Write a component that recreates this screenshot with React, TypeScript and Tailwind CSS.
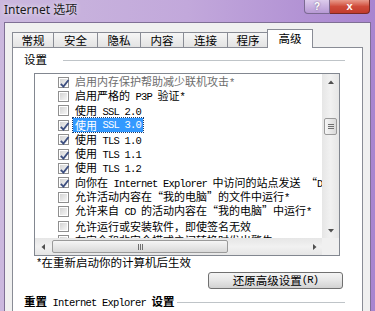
import React from "react";

const rows = [
  { t: "启用内存保护帮助减少联机攻击*", c: true, gray: true },
  { t: "启用严格的 P3P 验证*", c: false },
  { t: "使用 SSL 2.0", c: false },
  { t: "使用 SSL 3.0", c: true, sel: true },
  { t: "使用 TLS 1.0", c: true },
  { t: "使用 TLS 1.1", c: true },
  { t: "使用 TLS 1.2", c: true },
  { t: "向你在 Internet Explorer 中访问的站点发送 “Do Not Track” 请求", c: true },
  { t: "允许活动内容在“我的电脑”的文件中运行*", c: false },
  { t: "允许来自 CD 的活动内容在“我的电脑”中运行*", c: false },
  { t: "允许运行或安装软件，即使签名无效", c: false },
  { t: "在安全和非安全模式之间转换时发出警告", c: false },
];

const tabs = [
  { t: "常规", w: "w-[42px]" },
  { t: "安全", w: "w-[45px]" },
  { t: "隐私", w: "w-[44px]" },
  { t: "内容", w: "w-[44px]" },
  { t: "连接", w: "w-[45px]" },
  { t: "程序", w: "w-[42px]" },
];

// ascii runs get the half-width mono face, like SimSun does
function Mixed({ text, bold }: { text: string; bold?: boolean }) {
  const parts = text.split(/([\x20-\x7e]+)/).filter(Boolean);
  return (
    <>
      {parts.map((p, i) =>
        /^[\x20-\x7e]+$/.test(p) ? (
          <span key={i} className="font-['Liberation_Mono',monospace] text-[10.5px] tracking-[-0.8px] whitespace-pre">
            {p}
          </span>
        ) : (
          <span key={i} className={bold ? "font-bold" : ""}>
            {p}
          </span>
        )
      )}
    </>
  );
}

function Check({ on }: { on: boolean }) {
  return (
    <div className="w-[11px] h-[11px] shrink-0 border border-[#8f8f8f] bg-white p-[1px]">
      <div className="w-full h-full bg-gradient-to-br from-[#d4d4d4] to-[#f6f6f6] relative">
        {on && (
          <svg viewBox="0 0 9 9" className="absolute -left-[1px] -top-[1px] w-[11px] h-[11px]">
            <path d="M1.5 4.8 L3.6 7 L7.8 1.6" fill="none" stroke="#3d4f80" strokeWidth="1.5" />
          </svg>
        )}
      </div>
    </div>
  );
}

function Arrow({ dir }: { dir: "up" | "down" | "left" | "right" }) {
  const d = {
    up: "M1 5 L4 1.5 L7 5 Z",
    down: "M1 3 L4 6.5 L7 3 Z",
    left: "M5 1 L1.5 4 L5 7 Z",
    right: "M3 1 L6.5 4 L3 7 Z",
  }[dir];
  return (
    <svg viewBox="0 0 8 8" className="w-[8px] h-[8px]">
      <path d={d} fill="#505050" />
    </svg>
  );
}

export default function App() {
  return (
    <div className="w-[375px] h-[311px] overflow-hidden flex flex-col bg-gradient-to-r from-[#cbb8de] via-[#c2a8db] to-[#a985d0] font-['Noto_Sans_CJK_SC',sans-serif] text-black">
      {/* title bar */}
      <div className="h-[22px] shrink-0 flex items-start">
        <div className="pl-[4px] pt-[2px] text-[12px] leading-[15px] font-['Noto_Sans','Noto_Sans_CJK_SC',sans-serif] text-[#1b1b1b] [text-shadow:0_0_5px_#ffffff]">
          Internet 选项
        </div>
        <div className="ml-auto mr-[5px] flex">
          <div className="w-[26px] h-[14px] flex items-center justify-center rounded-bl-[4px] border border-t-0 border-[#7b6a92] bg-gradient-to-b from-[#dccbec] to-[#b799d4] text-[10px] leading-none font-bold text-white [text-shadow:0_0_2px_#6a5a80] font-['Liberation_Sans',sans-serif]">
            ?
          </div>
          <div className="w-[40px] h-[14px] flex items-center justify-center rounded-br-[4px] border border-t-0 border-l-0 border-[#7a2a24] bg-gradient-to-b from-[#e89a8c] via-[#cf4b3a] to-[#c23b2c] text-[11px] leading-none font-bold text-white font-['Liberation_Sans',sans-serif]">
            x
          </div>
        </div>
      </div>

      {/* client area */}
      <div className="flex-1 mx-[4px] border border-b-0 border-[#7f6f95] bg-[#f0f0f0] flex flex-col px-[7px] pt-[6px]">
        {/* tabs */}
        <div className="h-[18px] shrink-0 flex items-end text-[11.5px] leading-none">
          {tabs.map((tab) => (
            <div
              key={tab.t}
              className={`${tab.w} h-[15px] -mr-[1px] flex items-center justify-center border border-b-0 border-[#898c95] bg-gradient-to-b from-[#f6f6f6] to-[#e3e3e3] pt-[1px]`}
            >
              {tab.t}
            </div>
          ))}
          <div className="w-[46px] h-[19px] -mb-[1px] -ml-[1px] relative z-10 flex items-center justify-center border border-b-0 border-[#898c95] bg-white pb-[1px]">
            高级
          </div>
        </div>

        {/* tab page */}
        <div className="flex-1 bg-white border border-b-0 border-[#898c95] flex flex-col pt-[5px] text-[11px]">
          <div className="h-[14px] flex items-center pl-[11px] mr-[17px] text-[11.5px]">
            <span className="leading-none">设置</span>
            <div className="flex-1 ml-[16px] h-px bg-[#bfc4c8]" />
          </div>

          {/* tree list */}
          <div className="mt-[6px] ml-[21px] mr-[22px] h-[183px] border border-[#828790] flex flex-col">
            <div className="h-[164px] flex">
              <div className="flex-1 overflow-hidden pt-[1px] pl-[23px]">
                {rows.map((r) => (
                  <div key={r.t} className="h-[14.4px] flex items-center whitespace-nowrap leading-none">
                    <Check on={r.c} />
                    <div
                      className={
                        r.sel
                          ? "ml-[4px] px-[2px] h-[14px] flex items-center bg-[#3399ff] text-white outline outline-1 outline-dotted outline-[#1a3c6e]"
                          : `ml-[6px] ${r.gray ? "text-[#6d6d6d]" : ""}`
                      }
                    >
                      <Mixed text={r.t} />
                    </div>
                  </div>
                ))}
              </div>
              {/* vertical scrollbar */}
              <div className="w-[17px] flex flex-col bg-gradient-to-r from-[#e6e6e6] via-[#f1f1f1] to-[#e6e6e6]">
                <div className="h-[17px] flex items-center justify-center">
                  <Arrow dir="up" />
                </div>
                <div className="h-[27px]" />
                <div className="h-[17px] mx-[2px] rounded-[2px] border border-[#9a9a9a] bg-gradient-to-r from-[#f6f6f6] to-[#d9d9d9] flex flex-col items-center justify-center gap-[1px]">
                  <div className="w-[6px] h-px bg-[#6f6f6f]" />
                  <div className="w-[6px] h-px bg-[#6f6f6f]" />
                  <div className="w-[6px] h-px bg-[#6f6f6f]" />
                </div>
                <div className="flex-1" />
                <div className="h-[17px] flex items-center justify-center">
                  <Arrow dir="down" />
                </div>
              </div>
            </div>
            {/* horizontal scrollbar */}
            <div className="h-[17px] flex">
              <div className="flex-1 flex bg-gradient-to-b from-[#e6e6e6] via-[#f1f1f1] to-[#e6e6e6]">
                <div className="w-[17px] flex items-center justify-center">
                  <Arrow dir="left" />
                </div>
                <div className="w-[176px] my-[2px] rounded-[2px] border border-[#9a9a9a] bg-gradient-to-b from-[#f6f6f6] to-[#d9d9d9] flex items-center justify-center gap-[1px]">
                  <div className="w-px h-[6px] bg-[#6f6f6f]" />
                  <div className="w-px h-[6px] bg-[#6f6f6f]" />
                  <div className="w-px h-[6px] bg-[#6f6f6f]" />
                </div>
                <div className="flex-1" />
                <div className="w-[17px] flex items-center justify-center">
                  <Arrow dir="right" />
                </div>
              </div>
              <div className="w-[17px] bg-[#f0f0f0]" />
            </div>
          </div>

          <div className="h-[14px] ml-[23px] flex items-center leading-none text-[11.5px]">
            <Mixed text="*在重新启动你的计算机后生效" />
          </div>

          <div className="mt-[2px] self-end mr-[19px] w-[135px] h-[17px] rounded-[3px] border border-[#707070] bg-gradient-to-b from-[#f4f4f4] via-[#e6e6e6] to-[#d2d2d2] flex items-center justify-center leading-none text-[11.5px]">
            <Mixed text="还原高级设置(R)" />
          </div>

          <div className="mt-[6px] h-[14px] flex items-center pl-[11px] mr-[17px] leading-none text-[11.5px]">
            <span>
              <Mixed text="重置 Internet Explorer 设置" bold />
            </span>
            <div className="flex-1 ml-[2px] h-px bg-[#bfc4c8]" />
          </div>
        </div>
      </div>
    </div>
  );
}
